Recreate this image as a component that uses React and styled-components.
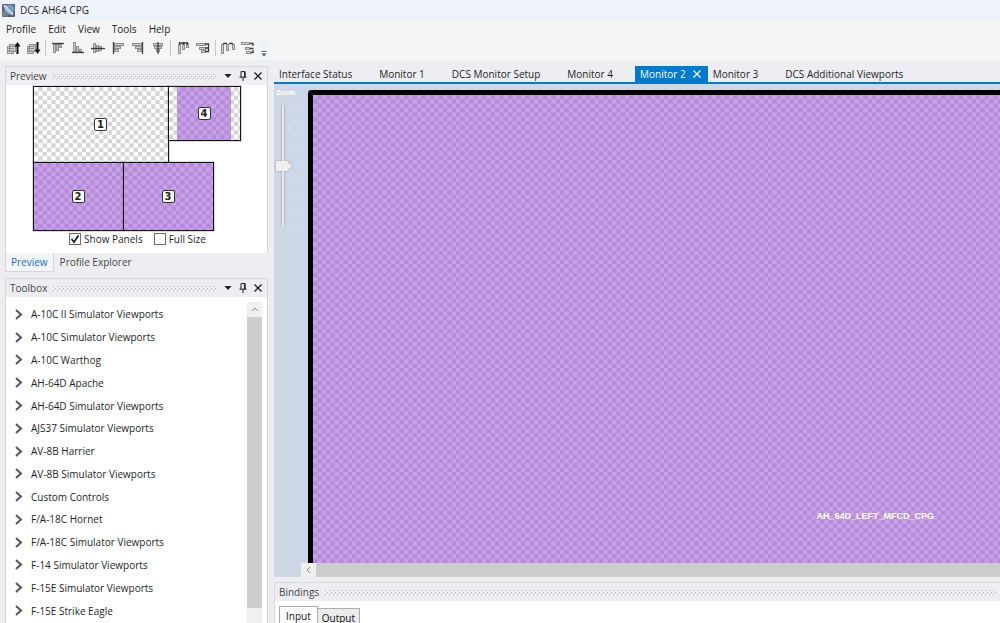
import React, { useId, useState } from 'react'
import styled, { createGlobalStyle } from 'styled-components'

const GlobalStyle = createGlobalStyle`
  * {
    box-sizing: border-box;
  }
  body {
    margin: 0;
    overflow: hidden;
    background: #eeeef2;
    color: #1e1e1e;
    font-family: 'Open Sans', 'Noto Sans', sans-serif;
    font-size: 10px;
    line-height: 14px;
  }
  button, input {
    font: inherit;
    color: inherit;
    margin: 0;
    padding: 0;
    border: 0;
    background: none;
  }
`

const Window = styled.div`
  height: 100vh;
  display: flex;
  flex-direction: column;
`

const TitleBar = styled.header`
  height: 20px;
  display: flex;
  align-items: center;
  gap: 5px;
  padding-left: 2px;
  background: #eef2fa;
`

const Title = styled.h1`
  margin: 0;
  font-size: 10px;
  font-weight: 400;
`

const MenuBar = styled.nav`
  height: 18px;
  display: flex;
  align-items: center;
  gap: 12px;
  padding-left: 6px;
  background: #f5f5f5;
`

const MenuItem = styled.button``

const Toolbar = styled.div`
  height: 22px;
  display: flex;
  align-items: flex-start;
  padding-left: 3px;
  background: #f5f5f5;
`

const ToolButton = styled.button`
  width: 20px;
  height: 20px;
  display: grid;
  place-items: center;
`

const ToolSeparator = styled.span`
  width: 1px;
  height: 16px;
  margin: 2px 2px 0;
  background: #c6c9d2;
`

const Overflow = styled.button`
  width: 12px;
  height: 22px;
  display: grid;
  place-items: end center;
  padding-bottom: 3px;
  background: #eef4fc;
`

const Workspace = styled.div`
  flex: 1;
  min-height: 0;
  display: flex;
  gap: 6px;
  padding: 6px 0 0 5px;
`

const Sidebar = styled.aside`
  width: 263px;
  flex: none;
  display: flex;
  flex-direction: column;
  gap: 6px;
`

const Main = styled.main`
  flex: 1;
  min-width: 0;
  display: flex;
  flex-direction: column;
`

const Panel = styled.section`
  display: flex;
  flex-direction: column;
  min-height: 0;
  flex: ${({ $grow }) => ($grow ? '1' : 'none')};
  border: 1px solid #d5d6e0;
  border-bottom: 0;
`

const PanelHeader = styled.div`
  height: 18px;
  flex: none;
  display: flex;
  align-items: center;
  gap: 6px;
  padding: 0 4px;
  color: #444;
`

const PanelTitle = styled.h2`
  margin: 0;
  font-size: 10px;
  font-weight: 400;
`

const Grip = styled.span`
  flex: 1;
  height: 5px;
  background-image:
    conic-gradient(from 270deg at 1px 1px, #b0b0b6 90deg, transparent 0),
    conic-gradient(from 270deg at 1px 1px, #b0b0b6 90deg, transparent 0);
  background-size: 4px 4px;
  background-position: 0 0, 2px 2px;
`

const PanelButtons = styled.div`
  display: flex;
  gap: 5px;
  color: #1e1e1e;
`

const PanelButton = styled.button`
  width: 10px;
  height: 12px;
  display: grid;
  place-items: center;
`

const PreviewBody = styled.div`
  display: flex;
  flex-direction: column;
  align-items: center;
  gap: 1px;
  height: 168px;
  padding-top: 1px;
  background: #fff;
`

const Stage = styled.div`
  position: relative;
  width: 208px;
  height: 145px;
`

const Monitor = styled.div`
  position: absolute;
  display: grid;
  place-items: center;
  border: 1px solid #141414;
  outline: 1px solid rgba(20, 20, 20, 0.15);
`

const MonitorPanel = styled.div`
  position: relative;
  grid-area: 1 / 1;
  width: 54px;
  height: 100%;
`

const MonitorNumber = styled.span`
  position: relative;
  grid-area: 1 / 1;
  width: 13px;
  height: 13px;
  border: 1px solid #333;
  border-radius: 2px;
  background: #fff;
  color: #222;
  font: bold 10px/11px 'DejaVu Sans', sans-serif;
  text-align: center;
`

const Texture = styled.svg`
  position: absolute;
  inset: 0;
  width: 100%;
  height: 100%;
`

const Options = styled.div`
  display: flex;
  gap: 11px;
  padding-left: 2px;
`

const Option = styled.label`
  display: flex;
  align-items: center;
  gap: 3px;
`

const CheckMark = styled.span`
  display: grid;
  place-items: center;

  > * {
    grid-area: 1 / 1;
  }
  svg {
    pointer-events: none;
  }
`

const CheckBox = styled.input`
  appearance: none;
  width: 12px;
  height: 12px;
  border: 1px solid #6e6e6e;
  background: #fff;
`

const DockTabs = styled.div`
  display: flex;
  height: 19px;
`

const DockTab = styled.button`
  height: 19px;
  padding: 0 5px;
  color: ${({ $active }) => ($active ? '#0e70c0' : '#444')};
  background: ${({ $active }) => ($active ? '#f5f5f7' : 'transparent')};
  border: 1px solid ${({ $active }) => ($active ? '#d5d6e0' : 'transparent')};
  border-top: 0;
`

const DockGroup = styled.div`
  display: flex;
  flex-direction: column;
`

const ToolboxBody = styled.div`
  flex: 1;
  min-height: 0;
  display: flex;
  padding: 5px 5px 0 0;
  background: #fff;
`

const ToolList = styled.ul`
  flex: 1;
  margin: 0;
  padding: 1px 0 1px 9px;
  list-style: none;
  display: flex;
  flex-direction: column;
`

const ToolItem = styled.li`
  flex: 1;
  min-height: 22px;
  display: flex;
`

const ToolToggle = styled.button`
  display: flex;
  align-items: center;
  gap: 8px;

  svg {
    color: #555;
  }
`

const ScrollBar = styled.div`
  display: flex;
  flex: none;
  flex-direction: ${({ $horizontal }) => ($horizontal ? 'row' : 'column')};
  background: #f0f0f0;
  ${({ $horizontal }) => ($horizontal ? 'height: 14px;' : 'width: 15px;')}
`

const ScrollArrow = styled.button`
  flex: none;
  width: 15px;
  height: ${({ $horizontal }) => ($horizontal ? '14px' : '15px')};
  display: grid;
  place-items: center;
  background: #f0f0f0;
  color: #888;
`

const ScrollThumb = styled.div`
  flex: 1;
  background: #cdcdcd;
  ${({ $tail }) => $tail && 'margin-bottom: 15px;'}
`

const DocTabs = styled.div`
  flex: none;
  height: 18px;
  display: flex;
  border-bottom: 2px solid #007acc;
`

const DocTab = styled.div`
  display: flex;
  align-items: center;
  gap: 5px;
  padding: 0 4px 0 5px;
  color: ${({ $active }) => ($active ? '#fff' : '#1e1e1e')};
  background: ${({ $active }) => ($active ? '#007acc' : 'transparent')};
`

const DocTabClose = styled.button`
  width: 13px;
  height: 14px;
  display: grid;
  place-items: center;
  visibility: ${({ $shown }) => ($shown ? 'visible' : 'hidden')};
`

const Editor = styled.div`
  flex: 1;
  min-height: 0;
  display: flex;
  background: #cdd7e5;
`

const ZoomColumn = styled.div`
  width: 27px;
  flex: none;
  padding: 5px 0 0 2px;
  color: #fff;
`

const ZoomLabel = styled.label`
  display: block;
  width: 22px;
  font: bold 7px/8px 'Liberation Sans', sans-serif;
`

const ZoomScale = styled.div`
  height: 122px;
  margin-top: 8px;
  display: flex;
  gap: 2px;
`

const ZoomSlider = styled.input`
  appearance: none;
  writing-mode: vertical-lr;
  width: 16px;
  height: 122px;
  filter: drop-shadow(0 0 1px #9a9a9a);

  &::-webkit-slider-runnable-track {
    width: 16px;
    background: linear-gradient(#e7eaea, #e7eaea) 6px 0 / 2px 100% no-repeat;
  }
  &::-webkit-slider-thumb {
    appearance: none;
    width: 16px;
    height: 10px;
    background: #f0f0f0;
    clip-path: polygon(0 0, 11px 0, 100% 50%, 11px 100%, 0 100%);
  }
`

const Ticks = styled.div`
  width: 3px;
  display: flex;
  flex-direction: column;
  justify-content: space-between;
`

const Tick = styled.span`
  height: 1px;
  background: #e3e9f1;
`

const Viewport = styled.div`
  flex: 1;
  min-width: 0;
  display: flex;
  flex-direction: column;
`

const Screen = styled.div`
  flex: 1;
  min-height: 0;
  margin: 6px 0 0 7px;
  border: solid #000;
  border-width: 5px 0 0 5px;
  border-top-left-radius: 4px;
  position: relative;
`

const ViewportName = styled.span`
  position: absolute;
  right: 66px;
  bottom: 40px;
  color: #fff;
  font: bold 9px/14px 'Liberation Sans', sans-serif;
`

const BindingsPanel = styled(Panel)`
  height: 41px;
  margin-top: 5px;
  border-right: 0;
`

const BindingsBody = styled.div`
  flex: 1;
  display: flex;
  align-items: flex-end;
  padding-left: 4px;
  background: #fff;
`

const BindingTab = styled.button`
  height: ${({ $active }) => ($active ? '17px' : '15px')};
  padding: ${({ $active }) => ($active ? '2px 6px 0' : '2px 4px 0')};
  color: #111;
  border: 1px solid #acacac;
  border-bottom: 0;
  background: ${({ $active }) => ($active ? '#fff' : '#ebebeb')};
  ${({ $active }) => !$active && 'border-left: 0;'}
`

// 6 x 6 cells per 26px tile
const darkCells = [0, 1, 2, 3, 4, 5].flatMap(y =>
  [0, 2, 4].map(x => `M${x + ((y + 1) % 2)} ${y}h1v1h-1z`)
).join('')

const Checker = ({ light, dark }) => {
  const id = useId()
  return (
    <Texture aria-hidden="true">
      <pattern id={id} width="26" height="26" patternUnits="userSpaceOnUse" viewBox="0 0 6 6">
        <rect width="6" height="6" fill={light} />
        <path d={darkCells} fill={dark} />
      </pattern>
      <rect width="100%" height="100%" fill={`url(#${id})`} />
    </Texture>
  )
}

const purple = { light: '#c89fe9', dark: '#b48bd5' }
const gray = { light: '#ffffff', dark: '#d5d5d5' }

const AppLogo = () => (
  <svg width="13" height="13" viewBox="0 0 13 13">
    <rect width="13" height="13" rx="1" fill="#5a6068" />
    <circle cx="7.500" cy="5.500" r="5" fill="#6d9fd0" />
    <path d="M1 1.500l2.500-.5L6 4l5.500 6-1.500 1.500L4 6z" fill="#e2e6e9" />
    <path d="M2.500 2.500l7.500 8" stroke="#8b9299" strokeWidth=".8" />
    <path d="M.5 6l6 6.500h-6z" fill="#7d8389" />
  </svg>
)

const pages = [[1, 5, 7, 8], [3, 3, 7, 8]]

// bars: [x, y, w, h], line: dark guide strokes
const glyphs = {
  forward: { bars: pages, detail: 'M1 7.500h7M1 10h7M3 5.500h7', arrow: 'M11.500 13V5', head: 'M8.500 5.500l3-4.500 3 4.500z' },
  backward: { bars: pages, detail: 'M1 7.500h7M1 10h7M3 5.500h7', arrow: 'M11.500 1v8', head: 'M8.500 8.500l3 4.500 3-4.500z' },
  top: { bars: [[2, 3, 3, 9], [5, 3, 3, 7], [8, 3, 3, 4]], line: 'M1 2.500h12' },
  bottom: { bars: [[2, 1, 3, 10], [5, 5, 3, 6], [8, 8, 3, 3]], line: 'M1 11.500h12' },
  middle: { bars: [[2, 2, 3, 10], [5, 4, 3, 7], [8, 5, 3, 5]], line: 'M0 7.500h14' },
  left: { bars: [[3, 2, 10, 3], [3, 5, 7, 3], [3, 8, 5, 3]], line: 'M2.500 1v12' },
  right: { bars: [[1, 2, 10, 3], [4, 5, 7, 3], [6, 8, 5, 3]], line: 'M11.500 1v12' },
  center: { bars: [[2, 2, 10, 3], [3, 5, 8, 3], [5, 8, 4, 3]], line: 'M7 1v12' },
  spaceH: { bars: [[2, 3, 3, 10], [6, 3, 3, 6], [10, 3, 3, 4]], line: 'M3 2h9M3.500 1v3M7.500 1v3M11.500 1v3' },
  spaceV: { bars: [[0, 2, 10, 3], [3, 6, 7, 3], [5, 9, 5, 3]], line: 'M9 3h3.500v7.500H9M9 7h3.500' },
  distH: { bars: [[0, 3, 3, 10], [5, 3, 3, 7], [11, 3, 3, 6]], line: 'M2 2.500h4M8 2.500h4' },
  distV: { bars: [[0, 1, 9, 3], [4, 6, 5, 3], [5, 10, 5, 3]], line: 'M9 2.500h3v2.500M9 7.500h3.500M12 9v2.500h-2' },
}

const ToolIcon = ({ name }) => {
  const { bars, line, detail, arrow, head } = glyphs[name]
  return (
    <svg width="14" height="14" viewBox="0 0 14 14" overflow="visible">
      {bars.map(([x, y, w, h], i) => (
        <rect
          key={i}
          x={x + 0.5}
          y={y + 0.5}
          width={w - 1}
          height={h - 1}
          fill="#cfcfcf"
          stroke="#8e8e8e"
        />
      ))}
      {detail && <path d={detail} stroke="#8e8e8e" />}
      {line && <path d={line} fill="none" stroke="#3c3c3c" strokeWidth="1.300" />}
      {arrow && <path d={arrow} stroke="#111" strokeWidth="2" />}
      {head && <path d={head} fill="#111" />}
    </svg>
  )
}

const Cross = ({ size = 8 }) => (
  <svg width={size} height={size} viewBox="0 0 8 8">
    <path d="M.5.5l7 7M7.500.5l-7 7" stroke="currentColor" strokeWidth="1.300" />
  </svg>
)

const Chevron = ({ d, w, h, stroke = 2 }) => (
  <svg width={w} height={h} viewBox={`0 0 ${w} ${h}`}>
    <path d={d} fill="none" stroke="currentColor" strokeWidth={stroke} />
  </svg>
)

const DockHeader = ({ title }) => (
  <PanelHeader>
    <PanelTitle>{title}</PanelTitle>
    <Grip />
    <PanelButtons>
      <PanelButton aria-label={`${title} menu`}>
        <svg width="8" height="4" viewBox="0 0 8 4">
          <path d="M.5 0h7L4 4z" fill="currentColor" />
        </svg>
      </PanelButton>
      <PanelButton aria-label={`Pin ${title}`}>
        <svg width="8" height="10" viewBox="0 0 8 10">
          <path d="M2 6V.6h4V6M.5 6.200h7M4 6v4" fill="none" stroke="currentColor" />
          <path d="M5 .5h1.300V6H5z" fill="currentColor" />
        </svg>
      </PanelButton>
      <PanelButton aria-label={`Close ${title}`}>
        <Cross />
      </PanelButton>
    </PanelButtons>
  </PanelHeader>
)

const CheckOption = ({ id, label, checked, onChange }) => (
  <Option htmlFor={id}>
    <CheckMark>
      <CheckBox type="checkbox" id={id} checked={checked} onChange={onChange} />
      {checked && (
        <svg width="10" height="10" viewBox="0 0 10 10">
          <path d="M1.500 5l2.500 3 4.500-6.500" fill="none" stroke="#1a1a1a" strokeWidth="1.700" />
        </svg>
      )}
    </CheckMark>
    {label}
  </Option>
)

const menus = ['Profile', 'Edit', 'View', 'Tools', 'Help']

const toolGroups = [
  ['forward', 'backward'],
  ['top', 'bottom', 'middle', 'left', 'right', 'center'],
  ['spaceH', 'spaceV'],
  ['distH', 'distV'],
]

const monitors = [
  { id: 1, left: 0, top: 0, width: 136, height: 77 },
  { id: 4, left: 135, top: 0, width: 73, height: 55, panel: true },
  { id: 2, left: 0, top: 76, width: 91, height: 69, filled: true },
  { id: 3, left: 90, top: 76, width: 91, height: 69, filled: true },
]

const tools = [
  'A-10C II Simulator Viewports',
  'A-10C Simulator Viewports',
  'A-10C Warthog',
  'AH-64D Apache',
  'AH-64D Simulator Viewports',
  'AJS37 Simulator Viewports',
  'AV-8B Harrier',
  'AV-8B Simulator Viewports',
  'Custom Controls',
  'F/A-18C Hornet',
  'F/A-18C Simulator Viewports',
  'F-14 Simulator Viewports',
  'F-15E Simulator Viewports',
  'F-15E Strike Eagle',
]

const documents = [
  'Interface Status',
  'Monitor 1',
  'DCS Monitor Setup',
  'Monitor 4',
  'Monitor 2',
  'Monitor 3',
  'DCS Additional Viewports',
]

const App = () => {
  const [showPanels, setShowPanels] = useState(true)
  const [fullSize, setFullSize] = useState(false)
  const [dockTab, setDockTab] = useState('Preview')
  const [activeDoc, setActiveDoc] = useState('Monitor 2')
  const [bindingTab, setBindingTab] = useState('Input')
  const [zoom, setZoom] = useState(50)

  return (
    <Window>
      <GlobalStyle />
      <TitleBar>
        <AppLogo />
        <Title>DCS AH64 CPG</Title>
      </TitleBar>
      <MenuBar>
        {menus.map(menu => (
          <MenuItem key={menu}>{menu}</MenuItem>
        ))}
      </MenuBar>
      <Toolbar>
        {toolGroups.map((group, i) => (
          <React.Fragment key={i}>
            {i > 0 && <ToolSeparator />}
            {group.map(name => (
              <ToolButton key={name} aria-label={name}>
                <ToolIcon name={name} />
              </ToolButton>
            ))}
          </React.Fragment>
        ))}
        <Overflow aria-label="More tools">
          <svg width="6" height="6" viewBox="0 0 6 6">
            <path d="M.5.5h5" stroke="#555" />
            <path d="M.5 2.500h5L3 5.500z" fill="#555" />
          </svg>
        </Overflow>
      </Toolbar>

      <Workspace>
        <Sidebar>
          <DockGroup>
            <Panel>
              <DockHeader title="Preview" />
              <PreviewBody>
                <Stage>
                  {monitors.map(({ id, panel, filled, ...place }) => (
                    <Monitor key={id} style={place}>
                      <Checker {...(filled && showPanels ? purple : gray)} />
                      {panel && showPanels && (
                        <MonitorPanel>
                          <Checker {...purple} />
                        </MonitorPanel>
                      )}
                      <MonitorNumber>{id}</MonitorNumber>
                    </Monitor>
                  ))}
                </Stage>
                <Options>
                  <CheckOption
                    id="show-panels"
                    label="Show Panels"
                    checked={showPanels}
                    onChange={() => setShowPanels(!showPanels)}
                  />
                  <CheckOption
                    id="full-size"
                    label="Full Size"
                    checked={fullSize}
                    onChange={() => setFullSize(!fullSize)}
                  />
                </Options>
              </PreviewBody>
            </Panel>
            <DockTabs>
              {['Preview', 'Profile Explorer'].map(tab => (
                <DockTab key={tab} $active={tab === dockTab} onClick={() => setDockTab(tab)}>
                  {tab}
                </DockTab>
              ))}
            </DockTabs>
          </DockGroup>

          <Panel $grow>
            <DockHeader title="Toolbox" />
            <ToolboxBody>
              <ToolList>
                {tools.map(tool => (
                  <ToolItem key={tool}>
                    <ToolToggle>
                      <Chevron d="M1 1l5 4.500L1 10" w={8} h={11} />
                      {tool}
                    </ToolToggle>
                  </ToolItem>
                ))}
              </ToolList>
              <ScrollBar>
                <ScrollArrow aria-label="Scroll up">
                  <Chevron d="M1 4l3-3 3 3" w={8} h={5} stroke={1} />
                </ScrollArrow>
                <ScrollThumb $tail />
              </ScrollBar>
            </ToolboxBody>
          </Panel>
        </Sidebar>

        <Main>
          <DocTabs>
            {documents.map(doc => (
              <DocTab key={doc} $active={doc === activeDoc}>
                <button onClick={() => setActiveDoc(doc)}>{doc}</button>
                <DocTabClose $shown={doc === activeDoc} aria-label={`Close ${doc}`}>
                  <Cross />
                </DocTabClose>
              </DocTab>
            ))}
          </DocTabs>
          <Editor>
            <ZoomColumn>
              <ZoomLabel htmlFor="zoom">Zoom</ZoomLabel>
              <ZoomScale>
                <ZoomSlider
                  type="range"
                  id="zoom"
                  value={zoom}
                  onChange={e => setZoom(e.target.value)}
                />
                <Ticks>
                  {[...Array(9)].map((_, i) => (
                    <Tick key={i} />
                  ))}
                </Ticks>
              </ZoomScale>
            </ZoomColumn>
            <Viewport>
              <Screen>
                <Checker {...purple} />
                <ViewportName>AH_64D_LEFT_MFCD_CPG</ViewportName>
              </Screen>
              <ScrollBar $horizontal>
                <ScrollArrow $horizontal aria-label="Scroll left">
                  <Chevron d="M4 1L1 4l3 3" w={5} h={8} stroke={1} />
                </ScrollArrow>
                <ScrollThumb />
              </ScrollBar>
            </Viewport>
          </Editor>
          <BindingsPanel>
            <PanelHeader>
              <PanelTitle>Bindings</PanelTitle>
              <Grip />
            </PanelHeader>
            <BindingsBody>
              {['Input', 'Output'].map(tab => (
                <BindingTab key={tab} $active={tab === bindingTab} onClick={() => setBindingTab(tab)}>
                  {tab}
                </BindingTab>
              ))}
            </BindingsBody>
          </BindingsPanel>
        </Main>
      </Workspace>
    </Window>
  )
}

export default App
